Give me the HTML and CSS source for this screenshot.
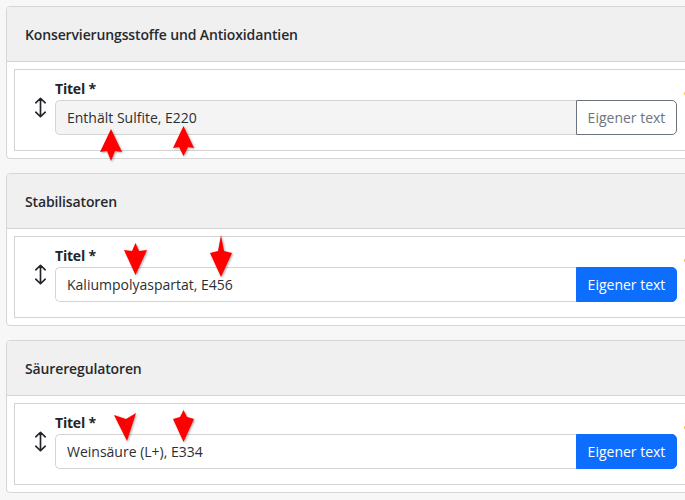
FILE: index.html
```html
<!DOCTYPE html>
<html lang="de">
<head>
<meta charset="utf-8">
<title>Zusatzstoffe</title>
<link rel="stylesheet" href="styles.css">
</head>
<body>
<div class="page">
  <section class="card">
    <div class="card-header">Konservierungsstoffe und Antioxidantien</div>
    <div class="card-body">
      <div class="item">
        <svg class="drag" viewBox="0 0 12 20" aria-hidden="true"><path d="M1.5 5.5L6 1.2l4.5 4.3M6 1.2v17.6M1.5 14.5L6 18.8l4.5-4.3"/></svg>
        <div class="field">
          <label class="label">Titel *</label>
          <div class="input-group">
            <div class="input input-readonly">Enthält Sulfite, E220</div>
            <button class="btn btn-outline">Eigener text</button>
          </div>
        </div>
        <span class="star"></span>
      </div>
    </div>
  </section>

  <section class="card">
    <div class="card-header">Stabilisatoren</div>
    <div class="card-body">
      <div class="item">
        <svg class="drag" viewBox="0 0 12 20" aria-hidden="true"><path d="M1.5 5.5L6 1.2l4.5 4.3M6 1.2v17.6M1.5 14.5L6 18.8l4.5-4.3"/></svg>
        <div class="field">
          <label class="label">Titel *</label>
          <div class="input-group">
            <div class="input">Kaliumpolyaspartat, E456</div>
            <button class="btn btn-primary">Eigener text</button>
          </div>
        </div>
        <span class="star"></span>
      </div>
    </div>
  </section>

  <section class="card">
    <div class="card-header">Säureregulatoren</div>
    <div class="card-body">
      <div class="item">
        <svg class="drag" viewBox="0 0 12 20" aria-hidden="true"><path d="M1.5 5.5L6 1.2l4.5 4.3M6 1.2v17.6M1.5 14.5L6 18.8l4.5-4.3"/></svg>
        <div class="field">
          <label class="label">Titel *</label>
          <div class="input-group">
            <div class="input">Weinsäure (L+), E334</div>
            <button class="btn btn-primary">Eigener text</button>
          </div>
        </div>
        <span class="star"></span>
      </div>
    </div>
  </section>
</div>

<svg class="mark mark-1" viewBox="0 0 22 32"><path d="M11 0L22 23L15 22L11 32L7 22L0 23Z"/></svg>
<svg class="mark mark-2" viewBox="0 0 21 30"><path d="M10.5 0L21 22L15 21L10.5 30L6 21L0 22Z"/></svg>
<svg class="mark mark-3" viewBox="0 0 23 32"><path d="M0 7L8 8L11.5 0L15 8L23 7L11.5 32Z"/></svg>
<svg class="mark mark-4" viewBox="0 0 22 42"><path d="M11 0L14 16L22 18L11 42L0 18L8 16Z"/></svg>
<svg class="mark mark-5" viewBox="0 0 22 28"><path d="M0 2L12 6L22 0L13 28Z"/></svg>
<svg class="mark mark-6" viewBox="0 0 21 32"><path d="M0 9L7 7L10.5 0L14 7L21 9L10.5 32Z"/></svg>
</body>
</html>
```

FILE: styles.css
```css
html, body {
  margin: 0;
  padding: 0;
  background: #f7f7f7;
  overflow: hidden;
}

body {
  font-family: "Open Sans", "Noto Sans", "Liberation Sans", sans-serif;
  color: #212529;
  width: 685px;
  height: 500px;
  position: relative;
}

.page {
  padding: 6px 0 0 6px;
  width: 760px;
}

.card {
  background: #fff;
  border: 1px solid #d6d6d6;
  border-radius: 4px;
  margin-bottom: 14px;
  overflow: hidden;
}

.card-header {
  height: 54px;
  background: #f0f0f0;
  border-bottom: 1px solid #d3d3d3;
  display: flex;
  align-items: center;
  padding-left: 18px;
  font-size: 14px;
  font-weight: 600;
  letter-spacing: -0.13px;
  color: #262a2e;
}

.card-body {
  padding: 7px;
}

.item {
  position: relative;
  height: 80px;
  border: 1px solid #d3d3d3;
  display: flex;
  align-items: flex-start;
  padding-left: 19px;
  box-sizing: content-box;
}

.drag {
  width: 13px;
  height: 21px;
  flex: none;
  margin-right: 8px;
  margin-top: 27px;
  fill: none;
  stroke: #212529;
  stroke-width: 1.6;
  stroke-linecap: round;
  stroke-linejoin: round;
}

.field {
  display: flex;
  flex-direction: column;
  margin-top: 10px;
}

.label {
  font-size: 14px;
  font-weight: 700;
  line-height: 17px;
  letter-spacing: -0.2px;
  margin-bottom: 3px;
}

.input-group {
  display: flex;
  height: 35px;
}

.input {
  width: 521px;
  box-sizing: border-box;
  border: 1px solid #d4d4d4;
  border-right: none;
  border-radius: 5px 0 0 5px;
  background: #fff;
  padding-left: 11px;
  display: flex;
  align-items: center;
  font-size: 14px;
  color: #2b2f33;
}

.input-readonly {
  background: #f4f4f4;
}

.btn {
  width: 101px;
  box-sizing: border-box;
  border-radius: 0 5px 5px 0;
  font-family: inherit;
  font-size: 14px;
  padding: 0;
  display: flex;
  align-items: center;
  justify-content: center;
}

.btn-outline {
  background: #fff;
  border: 1px solid #6c757d;
  color: #6c757d;
}

.btn-primary {
  background: #0d6efd;
  border: 1px solid #0d6efd;
  color: #fff;
}

.star {
  position: absolute;
  left: 669px;
  top: 22px;
  width: 4px;
  height: 3px;
  background: #f5c542;
  border-radius: 1px;
}

.mark {
  position: absolute;
  fill: #ff0000;
  filter: drop-shadow(1px 1px 1px rgba(0, 0, 0, 0.35));
}

.mark-1 { left: 100px; top: 129px; width: 22px; height: 32px; }
.mark-2 { left: 173px; top: 126px; width: 21px; height: 30px; }
.mark-3 { left: 124px; top: 243px; width: 23px; height: 32px; }
.mark-4 { left: 210px; top: 235px; width: 22px; height: 42px; }
.mark-5 { left: 114px; top: 413px; width: 22px; height: 28px; }
.mark-6 { left: 173px; top: 410px; width: 21px; height: 32px; }
```
